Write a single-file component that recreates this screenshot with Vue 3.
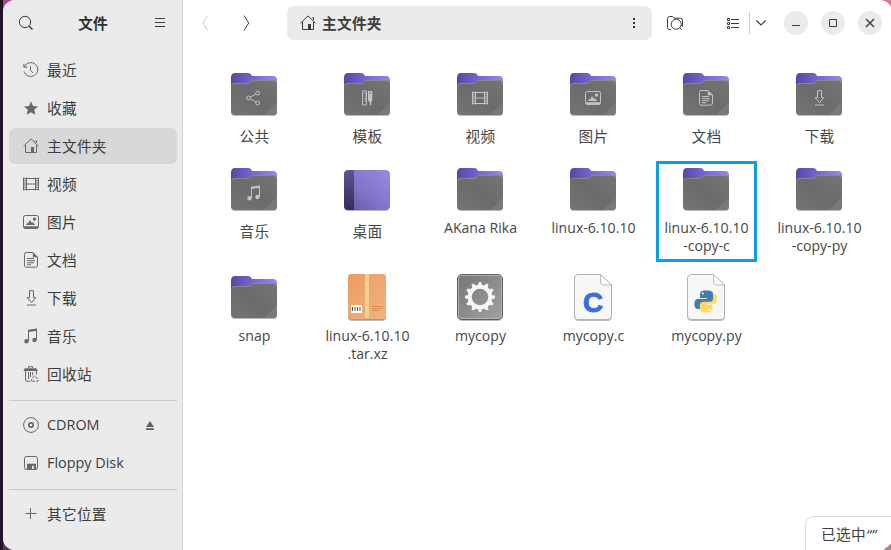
<script setup>
const places = [
  { icon: 'recent', label: '最近' },
  { icon: 'star', label: '收藏' },
  { icon: 'home', label: '主文件夹', active: true },
  { icon: 'video', label: '视频' },
  { icon: 'image', label: '图片' },
  { icon: 'document', label: '文档' },
  { icon: 'download', label: '下载' },
  { icon: 'music', label: '音乐' },
  { icon: 'trash', label: '回收站' }
]
const devices = [
  { icon: 'disc', label: 'CDROM', eject: true },
  { icon: 'floppy', label: 'Floppy Disk' }
]
const files = [
  { type: 'folder', emblem: 'share', lines: ['公共'], cjk: true },
  { type: 'folder', emblem: 'template', lines: ['模板'], cjk: true },
  { type: 'folder', emblem: 'video', lines: ['视频'], cjk: true },
  { type: 'folder', emblem: 'image', lines: ['图片'], cjk: true },
  { type: 'folder', emblem: 'document', lines: ['文档'], cjk: true },
  { type: 'folder', emblem: 'download', lines: ['下载'], cjk: true },
  { type: 'folder', emblem: 'music', lines: ['音乐'], cjk: true },
  { type: 'desktop', lines: ['桌面'], cjk: true },
  { type: 'folder', lines: ['AKana Rika'] },
  { type: 'folder', lines: ['linux-6.10.10'] },
  { type: 'folder', lines: ['linux-6.10.10', '-copy-c'], marked: true },
  { type: 'folder', lines: ['linux-6.10.10', '-copy-py'] },
  { type: 'folder', lines: ['snap'] },
  { type: 'archive', lines: ['linux-6.10.10', '.tar.xz'] },
  { type: 'program', lines: ['mycopy'] },
  { type: 'csource', lines: ['mycopy.c'] },
  { type: 'python', lines: ['mycopy.py'] }
]
</script>

<template>
  <div class="desktop">
    <svg class="defs" width="0" height="0" aria-hidden="true">
      <defs>
        <linearGradient id="tab" x1="0" y1="0" x2="1" y2="0">
          <stop offset="0" stop-color="#5548a4" /><stop offset=".45" stop-color="#7763d0" /><stop offset="1" stop-color="#9a86f0" />
        </linearGradient>
        <linearGradient id="front" x1="1" y1="0" x2="0" y2="1">
          <stop offset="0" stop-color="#757575" /><stop offset=".5" stop-color="#6b6b6b" /><stop offset="1" stop-color="#747474" />
        </linearGradient>
        <linearGradient id="desk" x1="1" y1="0" x2="0" y2="1">
          <stop offset="0" stop-color="#9989e2" /><stop offset=".55" stop-color="#8274c8" /><stop offset="1" stop-color="#60559f" />
        </linearGradient>
        <linearGradient id="dock" x1="0" y1="0" x2="0" y2="1">
          <stop offset="0" stop-color="#60568f" /><stop offset="1" stop-color="#352b5d" />
        </linearGradient>
        <linearGradient id="box" x1="0" y1="0" x2="1" y2="1">
          <stop offset="0" stop-color="#ec9c60" /><stop offset="1" stop-color="#f0b382" />
        </linearGradient>
        <linearGradient id="metal" x1="0" y1="0" x2="1" y2="1">
          <stop offset="0" stop-color="#757575" /><stop offset="1" stop-color="#a2a2a2" />
        </linearGradient>
        <symbol id="recent" viewBox="0 0 16 16"><path d="M1.4 4.8A7 7 0 1 1 1.1 9.5M.9 1.7v3.5h3.5M7.5 4.2v4.3l2.6 2.4" /></symbol>
        <symbol id="star" viewBox="0 0 16 16"><path class="solid" d="M8 1.2l2 4.7 5 .5-3.8 3.4 1.1 5L8 12.2l-4.3 2.6 1.1-5L1 6.4l5-.5z" /></symbol>
        <symbol id="home" viewBox="0 0 16 16"><path d="M.5 8.2L8 .9l7.5 7.3M2.5 7v7.5h11V7M12.2 2.7h1.3V5" /><path class="solid" d="M8 9h3v5.5H8z" /></symbol>
        <symbol id="video" viewBox="0 0 16 16"><path d="M.5 1.5v13M3.5 1.5v13M12.5 1.5v13M15.5 1.5v13M3.5 2.5h9M3.5 8h9M3.5 13.5h9" /><path d="M2 2v12M14 2v12" stroke-width="2" stroke-dasharray="1 1.2" /></symbol>
        <symbol id="image" viewBox="0 0 16 16"><rect x=".5" y="1.5" width="15" height="13" rx="1.8" /><path class="solid" d="M1 12.3h14v1.2q0 1-1 1H2q-1 0-1-1zM3 11l1-2 1 .5L7 6l2 3 1-1 2 3zM10 3.7h3v2.7h-3z" /></symbol>
        <symbol id="document" viewBox="0 0 16 16"><path d="M3 .5h7L14.5 5v8.2q0 2-2 2h-9q-2 0-2-2V2.5q0-2 1.5-2zM4 6.5h7M4 8.7h8M4 10.8h7M4 12.8h4" /><path class="solid" d="M9.8.5v4.7h4.7z" /></symbol>
        <symbol id="download" viewBox="0 0 16 16"><path d="M6.5.6h4v7h2.3l-4.3 5-4.3-5h2.3zM4 15h9" /></symbol>
        <symbol id="music" viewBox="0 0 16 16"><path d="M5.5 13V3l8-1.6v10.4" /><path class="solid" d="M5 1.7l9-1.2v2.2L5 4z" /><circle class="solid" cx="3.5" cy="13.2" r="2.2" /><circle class="solid" cx="11.5" cy="12" r="2.2" /></symbol>
        <symbol id="trash" viewBox="0 0 16 16"><path d="M2.5 4.5v8.7q0 2.2 1.7 2.2h3M13.4 4.5v4M5.5 6v7M7.5 6v5M9.6 6v3.2M5.5 2V.7h4V2" /><path class="solid" d="M1.7 2.2h11.6L15 5H.5z" /><path d="M9.5 15.3q-1.4-.1-1-1.4l2.3-3.6q.9-1 1.7 0l2.7 3.5q.4 1.4-1 1.5z" stroke-dasharray="3 1" /></symbol>
        <symbol id="disc" viewBox="0 0 16 16"><circle cx="8" cy="8" r="7.4" /><circle cx="8" cy="8" r="2.2" stroke-width="1.7" /></symbol>
        <symbol id="floppy" viewBox="0 0 16 16"><rect x="1.5" y="1.5" width="13" height="13" rx="2" /><path class="solid" d="M4 8.8h9v6h-2.2v-4H9v4H4z" /></symbol>
        <symbol id="share" viewBox="0 0 16 16"><circle cx="2.6" cy="8" r="1.9" /><circle cx="11.6" cy="3.1" r="1.9" /><circle cx="11.6" cy="12.9" r="1.9" /><path d="M4.3 7.1l5.6-3M4.3 8.9l5.6 3" /></symbol>
        <symbol id="template" viewBox="0 0 16 16"><path d="M3.6 1h3.8v14H3.6zM5.5 3.5h2M5.5 6h2M5.5 8.5h2M5.5 11h2" /><path class="solid" d="M9 1h4.3v9.5l-1.2 2v2.7h-1.3v-2.7L9 10.5z" /><path d="M11.2 2v2" stroke="#686868" /></symbol>
      </defs>
    </svg>
    <div class="window">
      <aside>
        <header class="side-head">
          <svg class="line search" viewBox="0 0 16 16"><circle cx="7" cy="7" r="5.7" /><path d="M11.2 11.2l3.3 3.3" stroke-width="1.5" /></svg>
          <b>文件</b>
          <svg class="line burger" viewBox="0 0 10 10"><path d="M0 .5h10M0 4.5h10M0 8.5h10" /></svg>
        </header>
        <nav>
          <div v-for="p in places" :key="p.label" class="place" :class="{ active: p.active }">
            <svg class="line"><use :href="'#' + p.icon" /></svg><span>{{ p.label }}</span>
          </div>
        </nav>
        <hr />
        <nav>
          <div v-for="d in devices" :key="d.label" class="place">
            <svg class="line"><use :href="'#' + d.icon" /></svg><span class="device">{{ d.label }}</span>
            <svg v-if="d.eject" class="eject" viewBox="0 0 8 9"><path d="M4 0l4 6H0zM0 7.2h8V9H0z" /></svg>
          </div>
        </nav>
        <hr />
        <nav>
          <div class="place">
            <svg class="line" viewBox="0 0 16 16"><path d="M2.5 7.5h11M7.5 2v11" /></svg><span>其它位置</span>
          </div>
        </nav>
      </aside>
      <main>
        <header class="toolbar">
          <svg class="line nav back" viewBox="0 0 7 16"><path d="M5.7.5L1 8l4.7 7.5" /></svg>
          <svg class="line nav forward" viewBox="0 0 7 16"><path d="M1 .5L5.7 8 1 15.5" /></svg>
          <div class="path">
            <svg class="line"><use href="#home" /></svg><b>主文件夹</b>
            <svg class="dots" viewBox="0 0 2 10"><path d="M0 0h2v2H0zM0 4h2v2H0zM0 8h2v2H0z" /></svg>
          </div>
          <svg class="line find" viewBox="0 0 16 16"><path d="M4 14.5H2.5q-2 0-2-2v-9q0-2 2-2h3l1.3 1.7h6.7q2 0 2 2v6.3" /><circle cx="9.2" cy="9.2" r="5" /><path d="M12.7 12.7l2.2 2.2" /></svg>
          <svg class="line list" viewBox="0 0 12 11"><path d="M.5.5h2v2h-2zM.5 4.5h2v2h-2zM.5 8.5h2v2h-2zM4 1.5h8M4 5.5h8M4 9.5h8" /></svg>
          <i class="divider"></i>
          <svg class="line chevron" viewBox="0 0 10 6"><path d="M.4.5L5 5 9.6.5" stroke-width="1.2" /></svg>
          <div class="controls">
            <span><svg class="line" viewBox="0 0 10 10"><path d="M1 7.5h8" /></svg></span>
            <span><svg class="line" viewBox="0 0 10 10"><path d="M1.5 1.5h7v7h-7z" /></svg></span>
            <span><svg class="line" viewBox="0 0 10 10"><path d="M1 1l8 8M9 1L1 9" stroke-width="1.4" /></svg></span>
          </div>
        </header>
        <section class="grid">
          <div v-for="(f, i) in files" :key="i" class="file" :class="{ marked: f.marked }">
            <svg class="thumb" viewBox="0 0 48 48">
              <g v-if="f.type === 'folder'">
                <path d="M1 8q0-5 4-5h13q3 0 4 3h21q4 0 4 4v10H1z" fill="url(#tab)" />
                <path d="M1 17q0-4 4-4h14l3-3h21q4 0 4 4v27q0 4-4 4H5q-4 0-4-4z" fill="url(#front)" />
                <path d="M1.4 16q.4-2.6 3.6-2.6h14.2l3-3H43q3.2 0 3.6 2.6" fill="none" stroke="#929292" stroke-width=".8" />
                <path d="M47 32v9q0 4-4 4h-9z" fill="#797979" />
              </g>
              <g v-else-if="f.type === 'desktop'">
                <rect x="1" y="5" width="46" height="40" rx="4.5" fill="url(#desk)" />
                <path d="M11 5H5.5Q1 5 1 9.5v31Q1 45 5.5 45H11z" fill="url(#dock)" />
              </g>
              <g v-else-if="f.type === 'archive'">
                <rect x="5" y="1" width="38" height="46" rx="4" fill="#d48c58" /><rect x="5" y="1" width="38" height="45" rx="4" fill="url(#box)" />
                <path d="M22 1h4v44h-4z" fill="#f5cf94" /><path d="M8 32h11v8H8z" fill="#fff" />
                <path d="M9.5 34v4M12 34v4M14.5 34v4M17 34v4" stroke="#555" /><path d="M29 33.5h11M29 35.5h11M29 37.5h7" stroke="#d88b52" stroke-width=".9" />
              </g>
              <g v-else-if="f.type === 'program'">
                <rect x="1.5" y="1.5" width="45" height="45" rx="4.5" fill="url(#metal)" stroke="#5c5c5c" /><rect x="2.5" y="2.5" width="43" height="43" rx="3.5" fill="none" stroke="#bbb" stroke-width=".8" />
                <circle cx="24" cy="24" r="10.3" fill="none" stroke="#f7f6f2" stroke-width="4" />
                <path v-for="n in 12" :key="n" d="M21.8 13l1-4h2.4l1 4z" fill="#f7f6f2" :transform="`rotate(${n * 30} 24 24)`" />
              </g>
              <g v-else>
                <path d="M9.5 1.5h22L42.5 12v30q0 4.5-4 4.5h-29q-4 0-4-4.5V6q0-4.5 4-4.5z" fill="#f7f7f7" stroke="#b2b2b2" />
                <path d="M31.5 1.5V9q0 3 3 3h8z" fill="#fff" stroke="#b2b2b2" stroke-width=".9" />
                <text v-if="f.type === 'csource'" x="24" y="39" class="letter">C</text>
                <g v-else>
                  <path d="M24 17.3q-6 0-6 3.7v4h6.5v1H15.8q-3.4 0-3.4 5.2 0 4.8 3.4 4.8h2.4v-3.2q0-3 3-3h7q2.8 0 2.8-3V21q0-3.7-7-3.7z" fill="#447dad" />
                  <path d="M24.6 39.5q6 0 6-3.7v-4h-6.4v-1h8.7q1.9-.6 2-5.2 0-4.6-2.3-4.6h-1.6v4.4q0 3.3-3 3.3h-6.6q-3.5 0-3.5 3.6v4q0 3.2 6.7 3.2z" fill="#ffda62" />
                  <circle cx="20.8" cy="20.4" r="1" fill="#fff" /><circle cx="27.8" cy="36.7" r="1" fill="#fff" />
                </g>
              </g>
              <svg v-if="f.emblem" class="emblem" x="16" y="20" width="16" height="16"><use :href="'#' + f.emblem" /></svg>
            </svg>
            <div class="name" :class="{ cjk: f.cjk }"><span v-for="l in f.lines" :key="l">{{ l }}</span></div>
          </div>
        </section>
      </main>
    </div>
    <div class="status">已选中<i>“”</i></div>
  </div>
</template>

<style>
body { margin: 0; overflow: hidden; }
</style>

<style scoped>
* { box-sizing: border-box; }
.desktop { position: relative; width: 891px; height: 550px; padding-left: 3px; overflow: hidden; color: #3d3d3d; font: 14.67px/24px "Open Sans", "Noto Sans CJK SC", sans-serif; background: linear-gradient(#24142a, #24142a) 0 0 / 3px 100% no-repeat, linear-gradient(90deg, #a94584 20px, transparent 20px) 0 0 / 100% 20px no-repeat, linear-gradient(90deg, #5c345f 50%, #dc7396 50%); }
.defs { position: absolute; }
.window { display: flex; width: 889px; height: 550px; overflow: hidden; border-radius: 12px; background: #fff; }
.line { width: 16px; height: 16px; flex: none; fill: none; stroke: currentColor; stroke-width: 1; }
.solid { fill: currentColor; stroke: none; }
aside { width: 180px; flex: none; background: #ebebeb; border-right: 1px solid #d6d6d6; }
.side-head { display: flex; align-items: center; height: 46px; margin-bottom: 6px; padding: 0 17px 0 15px; }
.side-head b { flex: 1; padding-right: 3px; text-align: center; font-family: "Noto Sans CJK SC", sans-serif; color: #2f2f2f; }
.burger { width: 10px; height: 10px; }
nav { display: flex; flex-direction: column; gap: 2px; padding: 0 5px 0 6px; }
.place { display: flex; align-items: center; gap: 8px; height: 36px; padding: 0 23px 0 14px; border-radius: 6px; letter-spacing: .3px; }
.place .device { font-size: 14.4px; letter-spacing: 0; }
.place .line { color: #686868; }
.place.active { background: #d8d8d8; }
.eject { width: 8px; height: 9px; margin-left: auto; fill: #606060; }
hr { height: 1px; margin: 8px 5px 6px 6px; border: 0; background: #cbcbcb; }
main { flex: 1; min-width: 0; }
.toolbar { display: flex; align-items: center; height: 46px; padding-left: 19px; }
.nav { width: 7px; }
.back { color: #ccc; }
.forward { margin-left: 34px; }
.path { display: flex; align-items: center; width: 365px; height: 34px; margin-left: 37px; padding: 0 17px 0 13px; border-radius: 7px; background: #ebebeb; }
.path b { margin-left: 6px; font-family: "Noto Sans CJK SC", sans-serif; letter-spacing: .3px; }
.dots { width: 2px; height: 10px; margin-left: auto; fill: #333; }
.find { margin-left: 15px; }
.list { width: 12px; height: 11px; margin-left: 44px; }
.divider { width: 1px; height: 22px; margin-left: 10px; background: #c9c9c9; }
.chevron { width: 10px; height: 6px; margin-left: 6px; }
.controls { display: flex; gap: 13px; margin-left: 18px; }
.controls span { display: flex; align-items: center; justify-content: center; width: 24px; height: 24px; border-radius: 50%; background: #ebebeb; }
.controls .line { width: 10px; height: 10px; }
.grid { display: grid; grid-template-columns: repeat(6, 113px); grid-template-rows: 95px 108px 95px; padding: 24px 0 0 14px; }
.file { position: relative; display: flex; flex-direction: column; align-items: center; }
.marked::after { content: ""; box-sizing: border-box; position: absolute; top: -4px; left: 7px; width: 101px; height: 101px; border: 3px solid #0c9fe6; }
.thumb { width: 48px; height: 48px; flex: none; position: relative; overflow: visible; margin-left: 1px; filter: drop-shadow(0 1px .6px #0004); }
.emblem { color: #c4c4c4; fill: none; stroke: currentColor; }
.letter { fill: #3b6de4; stroke: #3b6de4; stroke-width: 1; font: bold 28px "Liberation Sans", sans-serif; text-anchor: middle; }
.name { display: flex; flex-direction: column; align-items: center; padding: 6px 0 0 2px; color: #464646; font-size: 14.1px; line-height: 18px; white-space: nowrap; }
.name.cjk { font-size: 14.67px; line-height: 24px; letter-spacing: .3px; }
.status { position: absolute; left: 805px; top: 516px; width: 86px; height: 34px; padding: 5px 0 0 15px; border: 1px solid #dadada; border-width: 1px 0 0 1px; border-radius: 9px 0 0 0; background: linear-gradient(to bottom right, transparent 50%, #a08c8a 50%) 100% 100% / 8px 6px no-repeat, #fff; white-space: nowrap; letter-spacing: .3px; }
</style>
